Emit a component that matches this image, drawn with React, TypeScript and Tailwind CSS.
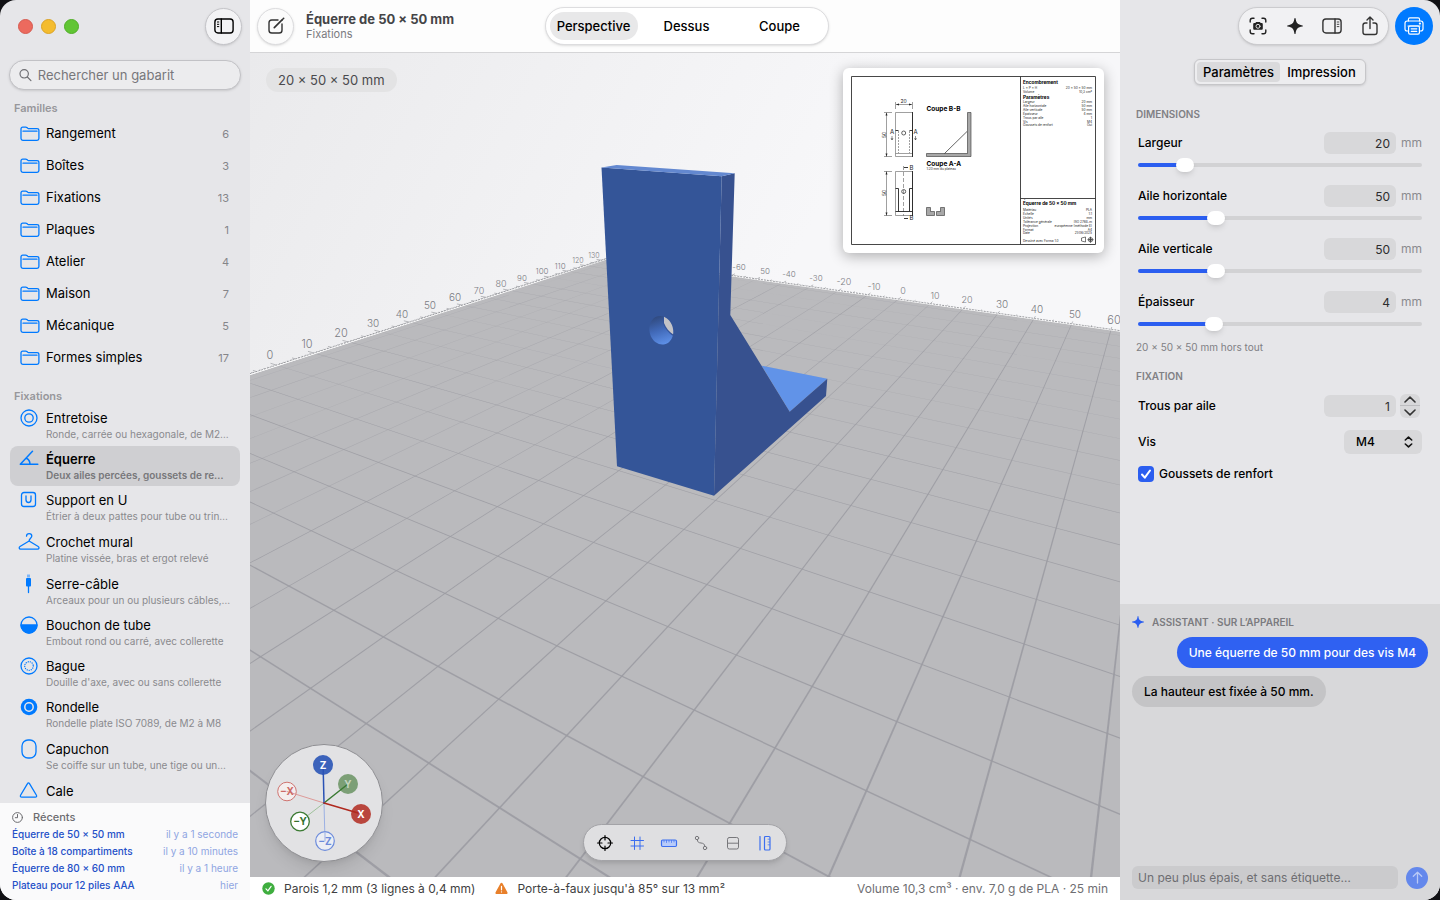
import React, { useState } from 'react';
import clsx from 'clsx';

type IconProps = { className?: string };

interface Family {
  name: string;
  count: number;
}

interface Template {
  name: string;
  detail?: string;
  icon: React.ReactNode;
  tall?: boolean;
}

interface Dimension {
  id: string;
  label: string;
  value: number;
  min: number;
  max: number;
}

const FONT = "font-['Inter','Liberation_Sans',sans-serif]";

/* ---------- icons ---------- */

function FolderIcon() {
  return (
    <svg width="20" height="16" viewBox="0 0 20 16" fill="none" stroke="#007aff" strokeWidth="1.3" strokeLinejoin="round" strokeLinecap="round">
      <path d="M1 12.6V2.9C1 1.8 1.7 1.2 2.7 1.2h3c.7 0 1 .2 1.500.600l.6.5c.4.3.7.4 1.200.4h8c1.300 0 1.900.7 1.900 1.800v8.100c0 1.200-.7 1.800-1.800 1.800H2.800C1.700 14.400 1 13.800 1 12.600Z" />
      <path d="M3 5.200h14" />
    </svg>
  );
}

function SidebarIcon({ right, className }: IconProps & { right?: boolean }) {
  return (
    <svg className={className} width="20" height="16" viewBox="0 0 20 16" fill="none" stroke="currentColor" strokeWidth="1.4" strokeLinecap="round">
      <rect x="0.9" y="1" width="18.200" height="14" rx="3" />
      {right ? (
        <>
          <path d="M13 1v14" />
          <path d="M15.200 4h1.700M15.200 6.300h1.700M15.200 8.600h1.700" strokeWidth="0.900" />
        </>
      ) : (
        <>
          <path d="M7.300 1v14" />
          <path d="M3.400 4h1.400M3.400 6.300h1.400M3.400 8.600h1.400" strokeWidth="1" />
        </>
      )}
    </svg>
  );
}

function ComposeIcon() {
  return (
    <svg width="18" height="18" viewBox="0 0 18 18" fill="none" stroke="#333" strokeWidth="1.4" strokeLinecap="round">
      <path d="M11 3H4.800C3 3 2 4 2 5.800v7.400C2 15 3 16 4.800 16h7.400c1.800 0 2.800-1 2.800-2.800V7" />
      <path d="M7.300 10.700 15.300 2.700" strokeWidth="1.700" />
      <path d="M16.300 1.700l.3-.3" strokeWidth="1.700" />
    </svg>
  );
}

function SearchIcon() {
  return (
    <svg width="14" height="14" viewBox="0 0 14 14" fill="none" stroke="#6f6f73" strokeWidth="1.300" strokeLinecap="round">
      <circle cx="5.700" cy="5.700" r="4.600" />
      <path d="m9.200 9.200 3.900 3.900" />
    </svg>
  );
}

function CameraFrameIcon() {
  return (
    <svg width="18" height="18" viewBox="0 0 18 18" fill="none" stroke="#222" strokeWidth="1.400" strokeLinecap="round">
      <path d="M1.200 5V3.400c0-1.400.8-2.200 2.200-2.200H5M13 1.200h1.600c1.400 0 2.200.8 2.200 2.200V5M16.800 13v1.600c0 1.400-.8 2.200-2.200 2.200H13M5 16.800H3.400c-1.400 0-2.200-.8-2.200-2.200V13" />
      <path d="M4.200 7.400c0-.8.500-1.300 1.300-1.300h.8l.8-1.100h3.800l.8 1.100h.8c.8 0 1.300.5 1.300 1.300v4.100c0 .8-.5 1.300-1.300 1.300h-7c-.8 0-1.300-.5-1.300-1.300Z" fill="#222" stroke="none" />
      <circle cx="9" cy="9.300" r="2" stroke="#eee" strokeWidth="0.900" />
    </svg>
  );
}

function SparkIcon({ size, color }: { size: number; color: string }) {
  return (
    <svg width={size} height={size} viewBox="0 0 16 16" fill={color}>
      <path d="M8 0c.4 0 .5.300.600.600.600 4.500 2 6 6.800 6.800.4.100.6.300.6.600s-.2.500-.6.600c-4.800.800-6.200 2.300-6.800 6.800-.1.300-.2.600-.6.600s-.5-.3-.6-.6C6.800 10.900 5.400 9.400.6 8.600.2 8.500 0 8.300 0 8s.2-.5.6-.6C5.400 6.600 6.800 5.100 7.400.6 7.500.3 7.600 0 8 0Z" />
    </svg>
  );
}

function ShareIcon() {
  return (
    <svg width="16" height="20" viewBox="0 0 16 20" fill="none" stroke="#333" strokeWidth="1.400" strokeLinecap="round" strokeLinejoin="round">
      <path d="M5 7H3.300C1.800 7 1 7.800 1 9.300v6.900c0 1.500.8 2.300 2.300 2.300h9.400c1.500 0 2.300-.8 2.300-2.300V9.300C15 7.800 14.200 7 12.700 7H11" />
      <path d="M8 12.500V1.300M5 4l3-2.900L11 4" />
    </svg>
  );
}

function PrinterIcon() {
  return (
    <svg width="20" height="18" viewBox="0 0 20 18" fill="none" stroke="#fff" strokeWidth="1.200" strokeLinecap="round" strokeLinejoin="round">
      <path d="M4.400 4V2.400c0-.9.500-1.500 1.500-1.500h8.200c1 0 1.500.6 1.500 1.500V4" />
      <path d="M4.500 14H3.200C1.700 14 1 13.300 1 11.800V6.300C1 4.800 1.700 4 3.200 4h13.600c1.500 0 2.200.8 2.200 2.300v5.500c0 1.500-.7 2.200-2.200 2.200h-1.300" />
      <rect x="4.600" y="9" width="10.800" height="8.200" rx="1.400" />
      <path d="M7.200 11.800h5.600M7.200 14.300h5.600" />
      <path d="M4 9h12" />
      <circle cx="15.900" cy="6.600" r="0.500" fill="#fff" />
    </svg>
  );
}

const blueIcon = {
  width: 22,
  height: 20,
  viewBox: '0 0 22 20',
  fill: 'none',
  stroke: '#007aff',
  strokeWidth: 1.3,
  strokeLinecap: 'round' as const,
  strokeLinejoin: 'round' as const,
};

/* ---------- data ---------- */

const families: Family[] = [
  { name: 'Rangement', count: 6 },
  { name: 'Boîtes', count: 3 },
  { name: 'Fixations', count: 13 },
  { name: 'Plaques', count: 1 },
  { name: 'Atelier', count: 4 },
  { name: 'Maison', count: 7 },
  { name: 'Mécanique', count: 5 },
  { name: 'Formes simples', count: 17 },
];

const templates: Template[] = [
  {
    name: 'Entretoise',
    detail: 'Ronde, carrée ou hexagonale, de M2…',
    icon: <svg {...blueIcon}><circle cx="11" cy="10" r="8" /><circle cx="11" cy="10" r="4.200" /></svg>,
  },
  {
    name: 'Équerre',
    detail: 'Deux ailes percées, goussets de re…',
    icon: <svg {...blueIcon}><path d="M14.500 2.300 2.300 15.300H19.800M8.300 9.300c2.400 1 3.600 3 3.700 6" strokeWidth="1.500" /></svg>,
  },
  {
    name: 'Support en U',
    detail: 'Étrier à deux pattes pour tube ou trin…',
    icon: <svg {...blueIcon}><rect x="3.500" y="2.500" width="14" height="14" rx="2.500" /><path d="M8 6v3.800c0 1.700.9 2.700 2.500 2.700S13 11.500 13 9.800V6" /></svg>,
    tall: true,
  },
  {
    name: 'Crochet mural',
    detail: 'Platine vissée, bras et ergot relevé',
    icon: <svg {...blueIcon}><path d="M8.500 4.200c0-1.600 1-2.600 2.600-2.600s2.700 1 2.700 2.500c0 2.300-2.700 2.200-2.700 5M11.100 9 2 14.500c-1.300.8-1 2.600.6 2.600h17c1.600 0 1.900-1.800.6-2.600L11.100 9" /></svg>,
    tall: true,
  },
  {
    name: 'Serre-câble',
    detail: 'Arceaux pour un ou plusieurs câbles,…',
    icon: (
      <svg {...blueIcon}>
        <rect x="9" y="0.500" width="3" height="3" fill="#7fb5f5" stroke="none" />
        <path d="M8 5c0-.6.300-.9.900-.9h3.200c.6 0 .9.300.9.900v6.200c0 .8-.4 1.300-1.200 1.300H9.200c-.8 0-1.200-.5-1.200-1.300Z" fill="#007aff" stroke="none" />
        <path d="M10.500 12v6.500" />
      </svg>
    ),
  },
  {
    name: 'Bouchon de tube',
    detail: 'Embout rond ou carré, avec collerette',
    icon: <svg {...blueIcon}><circle cx="11" cy="10" r="8" /><path d="M3 10h16a8 8 0 0 1-16 0Z" fill="#007aff" /></svg>,
  },
  {
    name: 'Bague',
    detail: "Douille d'axe, avec ou sans collerette",
    icon: <svg {...blueIcon}><circle cx="11" cy="10" r="8" /><circle cx="11" cy="10" r="4.300" strokeDasharray="0.100 2" /></svg>,
  },
  {
    name: 'Rondelle',
    detail: 'Rondelle plate ISO 7089, de M2 à M8',
    icon: <svg {...blueIcon}><circle cx="11" cy="10" r="8.300" fill="#007aff" stroke="none" /><circle cx="11" cy="10" r="4.200" stroke="#e6e6e9" strokeWidth="1.500" /></svg>,
    tall: true,
  },
  {
    name: 'Capuchon',
    detail: 'Se coiffe sur un tube, une tige ou un…',
    icon: <svg {...blueIcon}><rect x="4" y="1" width="14" height="18" rx="6" /></svg>,
    tall: true,
  },
  {
    name: 'Cale',
    icon: <svg {...blueIcon}><path d="M9.500 2.600 2.700 14c-.8 1.300-.2 2.100 1 2.100h13.600c1.200 0 1.800-.8 1-2.100L11.500 2.600c-.6-.9-1.500-.9-2 0Z" /></svg>,
  },
];

const recents = [
  { name: 'Équerre de 50 × 50 mm', when: 'il y a 1 seconde' },
  { name: 'Boîte à 18 compartiments', when: 'il y a 10 minutes' },
  { name: 'Équerre de 80 × 60 mm', when: 'il y a 1 heure' },
  { name: 'Plateau pour 12 piles AAA', when: 'hier' },
];

const dimensions: Dimension[] = [
  { id: 'largeur', label: 'Largeur', value: 20, min: 10, max: 80 },
  { id: 'aile-h', label: 'Aile horizontale', value: 50, min: 15, max: 150 },
  { id: 'aile-v', label: 'Aile verticale', value: 50, min: 15, max: 150 },
  { id: 'epaisseur', label: 'Épaisseur', value: 4, min: 2, max: 10 },
];

/* ---------- left sidebar ---------- */

function Sidebar() {
  const [selected, setSelected] = useState('Équerre');

  return (
    <aside className="w-[250px] shrink-0 flex flex-col bg-[#e6e6e9]">
      <div className="h-[52px] shrink-0 flex items-center justify-between pl-[18px] pr-2">
        <div className="flex gap-2">
          <span className="size-[15px] rounded-full bg-[#ec6a5e] border border-[#d65a50]" />
          <span className="size-[15px] rounded-full bg-[#f4bc2f] border border-[#dba325]" />
          <span className="size-[15px] rounded-full bg-[#61c534] border border-[#50ae27]" />
        </div>
        <button type="button" aria-label="Barre latérale" className="size-[37px] rounded-full border border-[#c4c4c8] bg-[#f3f3f5] shadow-sm flex items-center justify-center">
          <SidebarIcon />
        </button>
      </div>

      <div className="px-[9px] pt-2 shrink-0">
        <label className="h-[30px] rounded-full border border-[#c2c2c6] bg-[#ececee] shadow-sm flex items-center gap-[6px] pl-[9px] pr-3">
          <SearchIcon />
          <input type="text" aria-label="Rechercher un gabarit" placeholder="Rechercher un gabarit" className="w-full bg-transparent outline-none pt-px text-[13px] placeholder:text-[#77777b]" />
        </label>
      </div>

      <div className="flex-1 min-h-0 overflow-hidden">
        <h2 className="pl-[14px] mt-[10px] mb-[2px] h-4 leading-4 text-[11px] font-semibold text-[#97979b]">Familles</h2>
        <ul>
          {families.map(family => (
            <li key={family.name}>
              <button type="button" className="w-full h-8 pl-5 pr-[21px] flex items-center text-[13px]">
                <FolderIcon />
                <span className="ml-[6px]">{family.name}</span>
                <span className="ml-auto text-[11px] text-[#858589]">{family.count}</span>
              </button>
            </li>
          ))}
        </ul>

        <h2 className="pl-[14px] mt-[14px] mb-px h-4 leading-4 text-[11px] font-semibold text-[#97979b]">Fixations</h2>
        <ul className="flex flex-col gap-px px-[10px]">
          {templates.map(template => {
            const active = template.name === selected;
            return (
              <li key={template.name}>
                <button
                  type="button"
                  onClick={() => setSelected(template.name)}
                  className={clsx(
                    'w-full rounded-lg pl-2 pr-1 pt-[3px] flex items-start gap-[6px] text-left',
                    template.tall ? 'h-[41px]' : 'h-10',
                    active && 'bg-[#cfcfd2]',
                  )}
                >
                  <span className="w-[22px] shrink-0">{template.icon}</span>
                  <span className="min-w-0 flex-1">
                    <span className={clsx('block text-[13px] leading-5', active && 'font-semibold')}>{template.name}</span>
                    {template.detail && (
                      <span className={clsx('block truncate text-[10px] leading-3', active ? 'font-semibold text-[#77777a]' : 'text-[#8a8a8e]')}>{template.detail}</span>
                    )}
                  </span>
                </button>
              </li>
            );
          })}
        </ul>
      </div>

      <section className="shrink-0 h-[97px] bg-[#fafafb] px-3 pt-[6px]">
        <h2 className="h-[17px] flex items-center gap-[10px] text-[11px] font-medium text-[#6b6b6f]">
          <svg width="11" height="11" viewBox="0 0 11 11" fill="none" stroke="#6b6b6f" strokeLinecap="round">
            <circle cx="5.500" cy="5.500" r="4.900" />
            <path d="M5.500 2.500v3.200H3.300" />
          </svg>
          Récents
        </h2>
        <ul>
          {recents.map(recent => (
            <li key={recent.name} className="h-[17px] flex items-center justify-between text-[10px]">
              <a href="#" className="font-medium text-[#2450c8]">{recent.name}</a>
              <span className="text-[#8fa5e2]">{recent.when}</span>
            </li>
          ))}
        </ul>
      </section>
    </aside>
  );
}

/* ---------- 3D scene ---------- */

// Build plate projected with two vanishing points, in millimetres.
// REAR and LEFT are the two far edges of the plate.
const REAR = 134;
const LEFT = -113.7;
const RIGHT = 115;
const AX = -0.00201;
const AY = 0.00336;
// smallest depth that is still in front of the camera
const CLIP = 0.2;

function project(x: number, y: number): [number, number] {
  const a = AX * x;
  const s = AY * (y - REAR);
  const w = 1 + a + s;
  return [(898 - 655 * a + 1182 * s) / w, (299.5 + 78 * a + 73 * s) / w];
}

function quad(points: [number, number][]) {
  return points.map(([x, y]) => project(x, y).map(n => n.toFixed(1)).join(',')).join(' ');
}

const nearY = (x: number) => REAR + (CLIP - 1 - AX * x) / AY;
const nearX = (y: number) => Math.min(RIGHT, (CLIP - 1 - AY * (y - REAR)) / AX);

function range(from: number, to: number, step: number) {
  const out: number[] = [];
  for (let n = from; n <= to; n += step) out.push(n);
  return out;
}

const rearLabels = [
  [739, 270, '-60', 8], [765, 274, '50', 8], [789, 277, '-40', 8], [816, 281, '-30', 8],
  [844, 285, '-20', 9], [874, 290, '-10', 9], [903, 294, '0', 9], [935, 299, '10', 9],
  [967, 303, '20', 9], [1002, 308, '30', 10], [1037, 313, '40', 10], [1075, 318, '50', 10], [1114, 324, '60', 11],
] as const;

const leftLabels = [
  [270, 359, '0', 11], [307, 348, '10', 11], [341, 337, '20', 11], [373, 327, '30', 10],
  [402, 318, '40', 10], [430, 309, '50', 10], [455, 301, '60', 10], [479, 294, '70', 9],
  [501, 287, '80', 9], [522, 281, '90', 8], [542, 274, '100', 8], [560, 269, '110', 8],
  [578, 263, '120', 7], [594, 258, '130', 7],
] as const;

function Scene() {
  const ticks = (n: number) => (n % 10 === 0 ? 3 : n % 5 === 0 ? 2 : 1);

  return (
    <svg className="absolute inset-0 w-full h-full" viewBox="250 53 870 824" preserveAspectRatio="xMidYMid slice" role="img" aria-label="Vue 3D de l'équerre">
      <defs>
        <linearGradient id="wall" x1="0" y1="0" x2="0.600" y2="0.300">
          <stop offset="0" stopColor="#eaeaec" />
          <stop offset="1" stopColor="#f7f7f9" />
        </linearGradient>
        <linearGradient id="hole" x1="0.200" y1="0" x2="0.500" y2="1">
          <stop offset="0.100" stopColor="#2e4678" />
          <stop offset="0.500" stopColor="#4169b8" />
          <stop offset="0.900" stopColor="#5f92ea" />
        </linearGradient>
        <clipPath id="holeClip">
          <ellipse cx="661.300" cy="330.300" rx="11.800" ry="14.400" transform="rotate(-14 661.300 330.300)" />
        </clipPath>
      </defs>
      <rect x="250" y="53" width="870" height="824" fill="url(#wall)" />
      <polygon points={`${project(LEFT, REAR).join(',')} 1120,331 1120,877 250,877 250,375`} fill="#bababd" />

      <g fill="#9b9ba2">
        {range(-110, 110, 10).map(x => (
          <polygon key={x} points={quad([[x - 0.09, REAR], [x + 0.09, REAR], [x + 0.09, nearY(x)], [x - 0.09, nearY(x)]])} opacity={x < -40 ? 0.6 : 0.9} />
        ))}
        {range(-120, 130, 10).map(y => (
          <polygon key={y} points={quad([[LEFT, y - 0.09], [nearX(y), y - 0.09], [nearX(y), y + 0.09], [LEFT, y + 0.09]])} opacity={y > 30 ? 0.6 : 0.9} />
        ))}
      </g>

      {/* rulers along the two far edges */}
      <g stroke="#8f9096" strokeWidth="0.600">
        {range(-76, 74, 1).map(x => {
          const [x1, y1] = project(x, REAR);
          const [x2, y2] = project(x, REAR + ticks(x));
          return <line key={x} x1={x1} y1={y1} x2={x2} y2={y2} />;
        })}
        {range(-12, 133, 1).map(y => {
          const [x1, y1] = project(LEFT, y);
          const [x2, y2] = project(LEFT - ticks(y), y);
          return <line key={y} x1={x1} y1={y1} x2={x2} y2={y2} />;
        })}
      </g>
      <polyline points={quad([[LEFT, -14], [LEFT, REAR], [76, REAR]])} fill="none" stroke="#fff" strokeWidth="1.200" />
      <polyline points={quad([[LEFT - 0.5, -14], [LEFT - 0.5, REAR + 0.5], [76, REAR + 0.5]])} fill="none" stroke="#7d7e84" strokeWidth="0.700" strokeDasharray="2 1" />
      <g fill="#7b7c83" textAnchor="middle" fontWeight="300" className="font-['Inter',sans-serif]">
        {[...rearLabels, ...leftLabels].map(([x, y, text, size]) => (
          <text key={`${x}-${y}`} x={x} y={y} fontSize={size}>{text}</text>
        ))}
      </g>

      {/* bracket */}
      <polygon points="761.7,365.7 827.3,378.7 789.7,411.700" fill="#6193e8" />
      <polygon points="721.7,176.3 734.7,173.3 730.3,315 789.7,411.7 827.3,378.7 826,396 714,495.7" fill="#37518f" />
      <polygon points="601.5,167.5 721.7,176.3 714,495.7 617,466.3" fill="#345598" />
      <polygon points="601.5,167.5 616.7,165 734.7,173.3 721.7,176.3" fill="#6388d0" />
      <g clipPath="url(#holeClip)">
        <rect x="645" y="312" width="34" height="38" fill="url(#hole)" />
        <path d="M663 314v9c2 6 6 11 13 15v-24Z" fill="#34549a" />
        <path d="M664 314v9c2 5 5 9 10 12v-21Z" fill="#c3c3c7" />
      </g>
    </svg>
  );
}

/* ---------- technical drawing thumbnail ---------- */

const sheetParams: [string, string][] = [
  ['Largeur', '20 mm'], ['Aile horizontale', '50 mm'], ['Aile verticale', '50 mm'],
  ['Épaisseur', '4 mm'], ['Trous par aile', '1'], ['Vis', 'M4'], ['Goussets de renfort', 'Oui'],
];

const sheetTitle: [string, string][] = [
  ['Matériau', 'PLA'], ['Échelle', '1:1'], ['Unités', 'mm'], ['Tolérance générale', 'ISO 2768-m'],
  ['Projection', 'européenne (méthode E)'], ['Format', 'A4'], ['Date', '21/06/2025'],
];

function DrawingSheet() {
  return (
    <svg className="absolute top-[15px] right-4 w-[261px] h-[185px] rounded-md bg-white shadow-[0_3px_14px_rgba(0,0,0,0.3)]" viewBox="843 68 261 185" role="img" aria-label="Mise en plan">
      <defs>
        <pattern id="hatch" width="2" height="2" patternUnits="userSpaceOnUse" patternTransform="rotate(-45)">
          <path d="M0 1h2" stroke="#222" strokeWidth="0.800" />
        </pattern>
      </defs>
      <g fill="none" stroke="#333" strokeWidth="0.900">
        <path d="M851.500 76.500h244v168h-244ZM1020.500 76.500v168M1020.500 198.500h75" />
      </g>
      <g fill="none" stroke="#777" strokeWidth="0.700">
        <path d="M895.500 112.500h17v44h-17ZM895.500 153.500h17M895.500 171.500h17v44h-17Z" />
        <path d="M886.500 113v44M884 112.500h8M884 156.500h8M886.500 171v45M884 171.500h8M884 215.500h8M895.500 102v7M912.500 102v7M896 104.500h16" />
        <path d="M903.500 166v50" strokeDasharray="4 2" />
        <path d="M898.500 131v22M909.500 131v22" strokeDasharray="2 1" />
      </g>
      <g fill="#222">
        <path d="M886.500 112.500l1 3h-2ZM886.500 156.500l1-3h-2ZM886.500 171.500l1 3h-2ZM886.500 215.500l1-3h-2ZM896 104.500l3-1v2ZM912 104.500l-3-1v2Z" />
      </g>
      <g fill="none" stroke="#222" strokeWidth="0.900">
        <path d="M895.500 130.500h3M909.500 130.500h3M895.500 188.500h3v23M912.500 188.500h-3v23M895.500 211.500h17M912.500 112v45M912.500 171v45M904 218.500h4M904 167.500h4" />
        <path d="M944.500 153.500 967 131.500" strokeWidth="0.700" />
        <circle cx="903.700" cy="133" r="2" strokeWidth="0.700" />
        <circle cx="903.700" cy="191.500" r="2" strokeWidth="0.700" />
      </g>
      <g fill="url(#hatch)" stroke="#333" strokeWidth="0.600">
        <path d="M926.500 153.500h41v-41h3.500v44h-44.500Z" />
        <path d="M926.500 207.500h4v4h4v4h-8ZM944.500 207.500h-4v4h-4v4h8Z" />
      </g>
      <g fill="#222" className="font-['Inter',sans-serif]" fontSize="5" textAnchor="middle">
        <text x="903.500" y="103">20</text>
        <text x="884" y="137" transform="rotate(-90 884 135)">50</text>
        <text x="884" y="195" transform="rotate(-90 884 193)">50</text>
        <text x="892" y="134" fontSize="6">A</text>
        <text x="915.500" y="134" fontSize="6">A</text>
        <text x="911.500" y="170" fontSize="6">B</text>
        <text x="911.500" y="220" fontSize="6">B</text>
        <path d="M892 136v4M915.500 136v4M891 138l1 2 1-2M914.500 138l1 2 1-2" stroke="#222" strokeWidth="0.500" fill="none" />
      </g>
      <g fill="#000" className="font-['Inter',sans-serif]" fontWeight="700">
        <text x="926.500" y="111" fontSize="6.500">Coupe B-B</text>
        <text x="926.500" y="165.500" fontSize="6.500">Coupe A-A</text>
        <text x="1023" y="84" fontSize="4.700">Encombrement</text>
        <text x="1023" y="98.500" fontSize="4.700">Paramètres</text>
        <text x="1023" y="204.500" fontSize="4.700">Équerre de 50 × 50 mm</text>
      </g>
      <g fill="#222" className="font-['Inter',sans-serif]" fontSize="3.200">
        <text x="926.500" y="169.500">1:20 mm du plateau</text>
        <text x="1023" y="89">L × P × H</text>
        <text x="1092" y="89" textAnchor="end">20 × 50 × 50 mm</text>
        <text x="1023" y="93">Volume</text>
        <text x="1092" y="93" textAnchor="end">10,3 cm³</text>
        {sheetParams.map(([label, value], i) => (
          <g key={label}>
            <text x="1023" y={103 + i * 3.9}>{label}</text>
            <text x="1092" y={103 + i * 3.9} textAnchor="end">{value}</text>
          </g>
        ))}
        {sheetTitle.map(([label, value], i) => (
          <g key={label}>
            <text x="1023" y={211 + i * 3.9}>{label}</text>
            <text x="1092" y={211 + i * 3.9} textAnchor="end">{value}</text>
          </g>
        ))}
        <text x="1023" y="242">Dessiné avec Forma 1.0</text>
      </g>
      <g fill="none" stroke="#222" strokeWidth="0.600">
        <path d="M1081.500 238l4-1v5l-4-1Z" />
        <circle cx="1090.500" cy="239.700" r="2.200" />
        <circle cx="1090.500" cy="239.700" r="1" />
        <path d="M1087.500 239.700h6M1090.500 236.700v6" />
      </g>
    </svg>
  );
}

/* ---------- orientation gizmo ---------- */

function Gizmo() {
  return (
    <svg className="absolute left-[15px] bottom-[15px] size-[118px] rounded-full border border-[#8e8e92] bg-[#e2e2e4] shadow-lg" viewBox="266 745 116 116" role="img" aria-label="Orientation">
      <g strokeLinecap="round">
        <path d="M324 803 287 791.500" stroke="#dd9a98" strokeWidth="1" />
        <path d="M324 803 300 821.500" stroke="#9fc19b" strokeWidth="1" />
        <path d="M324 803 325 841" stroke="#9bb0e3" strokeWidth="1" />
      </g>
      <circle cx="287" cy="791.500" r="9.300" fill="#f4eeee" stroke="#cf7470" />
      <circle cx="300" cy="821.500" r="9.300" fill="#fff" stroke="#3b7a33" strokeWidth="1.300" />
      <circle cx="325" cy="841" r="9.300" fill="#eceef4" stroke="#6c8bdb" strokeWidth="1.200" />
      <circle cx="348" cy="784" r="10" fill="#7c9f76" />
      <circle cx="323" cy="765" r="10" fill="#3c63bb" />
      <circle cx="361" cy="814" r="10" fill="#b9463d" />
      <g strokeWidth="1.500" strokeLinecap="round">
        <path d="M287 791.500 296 794.300" stroke="#dd9a98" strokeWidth="1" />
        <path d="M325 832v9" stroke="#9bb0e3" strokeWidth="1" />
        <path d="M324 803 348 784" stroke="#3b7a33" />
        <path d="M324 803 323.200 769" stroke="#2a52b5" />
        <path d="M324 803 358 813" stroke="#b0291f" />
      </g>
      <g className="font-['Inter',sans-serif]" fontSize="10" fontWeight="700" textAnchor="middle">
        <text x="323" y="768.500" fill="#fff">Z</text>
        <text x="348" y="787.500" fill="#c5d6c2">Y</text>
        <text x="361" y="818" fill="#fff">X</text>
        <text x="287" y="795" fill="#cc6a66">−X</text>
        <text x="300" y="825" fill="#35702d">−Y</text>
        <text x="325" y="844.500" fill="#6c8bdb">−Z</text>
      </g>
    </svg>
  );
}

const tools = [
  {
    label: 'Recentrer',
    icon: <g stroke="#000" strokeWidth="1.200"><circle cx="9" cy="9" r="5.700" /><path d="M9 1.500v4.500M9 12v4.500M1.500 9H6M12 9h4.500" /></g>,
  },
  {
    label: 'Grille',
    icon: <g stroke="#3b6ef0"><path d="M6.500 3v12.500M12 3v12.500M3 6.500h12.500M3 12h12.500" /></g>,
  },
  {
    label: 'Règle',
    icon: <g stroke="#3b6ef0" strokeWidth="1.200"><rect x="1.500" y="6" width="15" height="6.500" rx="1.200" fill="#b8cbfa" /><path d="M4 6.500v1.500M6.500 6.500v2M9 6.500v1.500M11.500 6.500v2M14 6.500v1.500" strokeWidth="0.700" /></g>,
  },
  {
    label: 'Trajet',
    icon: <g stroke="#77777b"><circle cx="5" cy="4" r="1.700" /><circle cx="13" cy="14" r="1.700" /><path d="M5.300 5.700c.3 2.800 1.500 3 3.700 3.300s3.500.7 3.900 3.300" /></g>,
  },
  {
    label: 'Coupe',
    icon: <g stroke="#77777b"><rect x="3.500" y="3.500" width="11" height="11.500" rx="1.800" /><path d="M3.500 9.200h11" /></g>,
  },
  {
    label: 'Cotes',
    icon: <g stroke="#3b6ef0" strokeWidth="1.200"><path d="M4 2.500v13.500" /><rect x="8.500" y="2.500" width="5.500" height="13.500" rx="1" /><path d="M12 5.200h1.500M12 8h1.500M12 10.800h1.500" strokeWidth="0.700" /></g>,
  },
];

/* ---------- centre column ---------- */

function Viewport() {
  const [view, setView] = useState('Perspective');

  return (
    <main className="flex-1 min-w-0 flex flex-col bg-white">
      <header className="h-[53px] shrink-0 border-b border-[#d5d5d7] bg-[#fdfdfd] grid grid-cols-[1fr_auto_1fr] items-center pl-[7px] pr-1">
        <div className="flex items-center gap-3">
          <button type="button" aria-label="Renommer" className="size-[37px] rounded-full border border-[#dcdcde] bg-[#fbfbfb] shadow-sm flex items-center justify-center">
            <ComposeIcon />
          </button>
          <div>
            <h1 className="text-[13px] leading-4 font-bold text-[#444447] whitespace-nowrap">Équerre de 50 × 50 mm</h1>
            <p className="text-[11px] leading-[14px] text-[#7b7b7f]">Fixations</p>
          </div>
        </div>
        <div className="h-[38px] w-[284px] p-1 rounded-full border border-[#dddddf] bg-white shadow-sm flex gap-[5px]">
          {['Perspective', 'Dessus', 'Coupe'].map(name => (
            <button
              key={name}
              type="button"
              onClick={() => setView(name)}
              className={clsx('flex-1 h-7 pt-px rounded-full text-[13px] font-medium', view === name && 'bg-[#e8e8e9]')}
            >
              {name}
            </button>
          ))}
        </div>
        <div />
      </header>

      <div className="flex-1 min-h-0 relative overflow-hidden">
        <Scene />
        <div className="absolute left-4 top-[15px] h-6 px-3 pt-px rounded-full bg-[#e3e3e4] flex items-center text-[13px] text-[#4a4a4d]">20 × 50 × 50 mm</div>
        <DrawingSheet />
        <Gizmo />
        <div className="absolute bottom-4 left-1/2 -translate-x-1/2 h-[37px] px-[5px] rounded-full border border-[#a3a3a7] bg-[#dfdfe1] shadow-md flex items-center">
          {tools.map(tool => (
            <button key={tool.label} type="button" aria-label={tool.label} className="w-8 h-7 flex items-center justify-center">
              <svg width="18" height="18" viewBox="0 0 18 18" fill="none" strokeLinecap="round">{tool.icon}</svg>
            </button>
          ))}
        </div>
      </div>

      <footer className="h-[23px] shrink-0 bg-white flex items-center px-3 text-[12px] text-[#3f3f42] whitespace-nowrap">
        <svg width="13" height="13" viewBox="0 0 13 13" fill="none">
          <circle cx="6.500" cy="6.500" r="6.200" fill="#3fae3f" />
          <path d="m4 6.800 1.900 2 3.200-4.500" stroke="#fff" strokeWidth="1.200" strokeLinecap="round" />
        </svg>
        <span className="ml-[9px]">Parois 1,2 mm (3 lignes à 0,4 mm)</span>
        <svg className="ml-5" width="13" height="13" viewBox="0 0 13 13" fill="none">
          <path d="M5.400 1.500.6 10.300c-.5 1 0 1.800 1.100 1.800h9.600c1.100 0 1.600-.8 1.100-1.800L7.600 1.500c-.5-.9-1.700-.9-2.200 0Z" fill="#e8802b" />
          <path d="M6.500 4.300v3.500M6.500 9.800v.1" stroke="#fff" strokeWidth="1.200" strokeLinecap="round" />
        </svg>
        <span className="ml-[9px]">Porte-à-faux jusqu'à 85° sur 13 mm²</span>
        <span className="ml-auto text-[#6e6e72]">Volume 10,3 cm³ · env. 7,0 g de PLA · 25 min</span>
      </footer>
    </main>
  );
}

/* ---------- right panel ---------- */

function DimensionField({ dim }: { dim: Dimension }) {
  const [value, setValue] = useState(dim.value);
  const ratio = (value - dim.min) / (dim.max - dim.min);
  // centre of the 18px thumb
  const stop = `calc(9px + (100% - 18px) * ${ratio})`;

  return (
    <div className="h-[53px]">
      <div className="h-[22px] flex items-center">
        <label htmlFor={dim.id} className="flex-1 text-[12px] font-medium">{dim.label}</label>
        <input
          id={dim.id}
          type="text"
          inputMode="numeric"
          value={value}
          onChange={e => setValue(parseInt(e.target.value) || 0)}
          className="w-[72px] h-[22px] rounded-md bg-[#d8d8da] px-[6px] text-right text-[12px] text-[#2c2c2e] outline-none"
        />
        <span className="w-[26px] text-right text-[12px] text-[#8a8a8e]">mm</span>
      </div>
      <input
        type="range"
        aria-label={dim.label}
        min={dim.min}
        max={dim.max}
        value={value}
        onChange={e => setValue(Number(e.target.value))}
        className="block w-full h-1 mt-[9px] rounded-full appearance-none [&::-webkit-slider-thumb]:appearance-none [&::-webkit-slider-thumb]:w-[18px] [&::-webkit-slider-thumb]:h-[14px] [&::-webkit-slider-thumb]:rounded-full [&::-webkit-slider-thumb]:bg-white [&::-webkit-slider-thumb]:shadow-md"
        style={{ background: `linear-gradient(to right, #2b5ef0 ${stop}, #d2d2d4 ${stop})` }}
      />
    </div>
  );
}

function Inspector() {
  const [tab, setTab] = useState('Paramètres');
  const [holes, setHoles] = useState(1);
  const [gussets, setGussets] = useState(true);

  return (
    <aside className="w-[320px] shrink-0 flex flex-col bg-[#e6e6e9] text-[12px]">
      <div className="h-[52px] shrink-0 flex items-center justify-end gap-[6px] pr-[7px]">
        <div className="w-[151px] h-[38px] px-[10px] rounded-full border border-[#cbcbce] bg-[#f1f1f3] shadow-sm flex items-center justify-between">
          <button type="button" aria-label="Capture"><CameraFrameIcon /></button>
          <button type="button" aria-label="Assistant"><SparkIcon size={16} color="#222" /></button>
          <button type="button" aria-label="Inspecteur"><SidebarIcon right className="text-[#333]" /></button>
          <button type="button" aria-label="Partager"><ShareIcon /></button>
        </div>
        <button type="button" aria-label="Imprimer" className="size-[38px] rounded-full bg-[#007aff] flex items-center justify-center">
          <PrinterIcon />
        </button>
      </div>

      <div className="mt-[7px] mx-auto w-[172px] h-[26px] shrink-0 p-[2px] rounded-md border border-[#c6c6c9] bg-[#ededef] shadow-sm flex">
        {['Paramètres', 'Impression'].map(name => (
          <button
            key={name}
            type="button"
            onClick={() => setTab(name)}
            className={clsx('flex-1 pt-px rounded text-[13px] font-medium', tab === name && 'bg-[#dadadc]')}
          >
            {name}
          </button>
        ))}
      </div>

      <div className="flex-1 min-h-0 px-[18px]">
        <h2 className="-ml-[2px] mt-[21px] mb-[10px] h-4 leading-4 text-[10px] font-semibold text-[#808084]">DIMENSIONS</h2>
        {dimensions.map(dim => <DimensionField key={dim.id} dim={dim} />)}

        <p className="-ml-[2px] mt-[-5px] text-[10px] leading-4 text-[#808084]">20 × 50 × 50 mm hors tout</p>
        <h2 className="-ml-[2px] mt-[13px] mb-[10px] h-4 leading-4 text-[10px] font-semibold text-[#808084]">FIXATION</h2>

        <div className="h-6 flex items-center">
          <label htmlFor="trous" className="flex-1 font-medium">Trous par aile</label>
          <input
            id="trous"
            type="text"
            inputMode="numeric"
            value={holes}
            onChange={e => setHoles(parseInt(e.target.value) || 0)}
            className="w-[72px] h-[22px] rounded-md bg-[#d8d8da] px-[6px] text-right text-[#2c2c2e] outline-none"
          />
          <div className="ml-1 mr-[2px] w-5 h-6 rounded-md bg-[#d8d8da] flex flex-col divide-y divide-[#bdbdc0]">
            <button type="button" aria-label="Plus" onClick={() => setHoles(holes + 1)} className="h-3 flex items-center justify-center">
              <svg width="12" height="7" viewBox="0 0 12 7" fill="none" stroke="#333" strokeWidth="1.600" strokeLinecap="round" strokeLinejoin="round"><path d="M1 6l5-4.800L11 6" /></svg>
            </button>
            <button type="button" aria-label="Moins" onClick={() => setHoles(Math.max(0, holes - 1))} className="h-3 flex items-center justify-center">
              <svg width="12" height="7" viewBox="0 0 12 7" fill="none" stroke="#333" strokeWidth="1.600" strokeLinecap="round" strokeLinejoin="round"><path d="M1 1l5 4.800L11 1" /></svg>
            </button>
          </div>
        </div>

        <div className="mt-3 h-6 flex items-center justify-between">
          <label htmlFor="vis" className="font-medium">Vis</label>
          <div className="relative">
            <select id="vis" defaultValue="M4" className="block w-[78px] h-6 pl-3 rounded-md bg-[#d8d8da] appearance-none font-medium outline-none">
              <option>M3</option>
              <option>M4</option>
              <option>M5</option>
            </select>
            <svg className="absolute right-[9px] top-[6px] pointer-events-none" width="9" height="12" viewBox="0 0 9 12" fill="none" stroke="#111" strokeWidth="1.600" strokeLinecap="round" strokeLinejoin="round">
              <path d="M1.300 4l3.200-2.900L7.700 4M1.300 8l3.200 2.900L7.700 8" />
            </svg>
          </div>
        </div>

        <label className="mt-3 h-4 flex items-center gap-[5px] font-medium w-fit">
          <span className="relative size-4">
            <input type="checkbox" checked={gussets} onChange={e => setGussets(e.target.checked)} className="block size-4 appearance-none rounded bg-white checked:bg-[#2b5ef0]" />
            {gussets && (
              <svg className="absolute inset-0 pointer-events-none" width="16" height="16" viewBox="0 0 16 16" fill="none" stroke="#fff" strokeWidth="2" strokeLinecap="round" strokeLinejoin="round">
                <path d="m4 8.500 2.800 3.200L12 4.500" />
              </svg>
            )}
          </span>
          Goussets de renfort
        </label>
      </div>

      <section className="h-[296px] shrink-0 bg-[#d8d8da] px-3 pt-[10px] pb-[11px] flex flex-col">
        <h2 className="h-4 flex items-center gap-2 text-[10px] font-semibold text-[#7b7b7f]">
          <SparkIcon size={12} color="#2b5ef0" />
          ASSISTANT · SUR L’APPAREIL
        </h2>
        <p className="mt-[7px] h-[31px] px-3 rounded-full bg-[#2f61f2] text-white flex items-center self-end font-medium">Une équerre de 50 mm pour des vis M4</p>
        <p className="mt-2 h-[31px] px-3 rounded-full bg-[#c4c4c6] flex items-center self-start font-medium">La hauteur est fixée à 50 mm.</p>
        <form className="mt-auto flex items-center gap-2" onSubmit={e => e.preventDefault()}>
          <input type="text" aria-label="Message à l'assistant" placeholder="Un peu plus épais, et sans étiquette…" className="flex-1 min-w-0 h-[23px] rounded-md bg-[#cbcbcd] px-[6px] outline-none placeholder:text-[#6e6e72]" />
          <button type="submit" aria-label="Envoyer" className="size-[22px] rounded-full bg-[#6488ec] flex items-center justify-center">
            <svg width="11" height="13" viewBox="0 0 11 13" fill="none" stroke="#b9c9f6" strokeWidth="1.300" strokeLinecap="round" strokeLinejoin="round"><path d="M5.500 12V1.300M1.300 5.300l4.200-4.100 4.200 4.100" /></svg>
          </button>
        </form>
      </section>
    </aside>
  );
}

export default function App() {
  return (
    <div className={clsx('h-screen bg-[#111114] text-black', FONT)}>
      <div className="h-full flex overflow-hidden rounded-2xl">
        <Sidebar />
        <Viewport />
        <Inspector />
      </div>
    </div>
  );
}
